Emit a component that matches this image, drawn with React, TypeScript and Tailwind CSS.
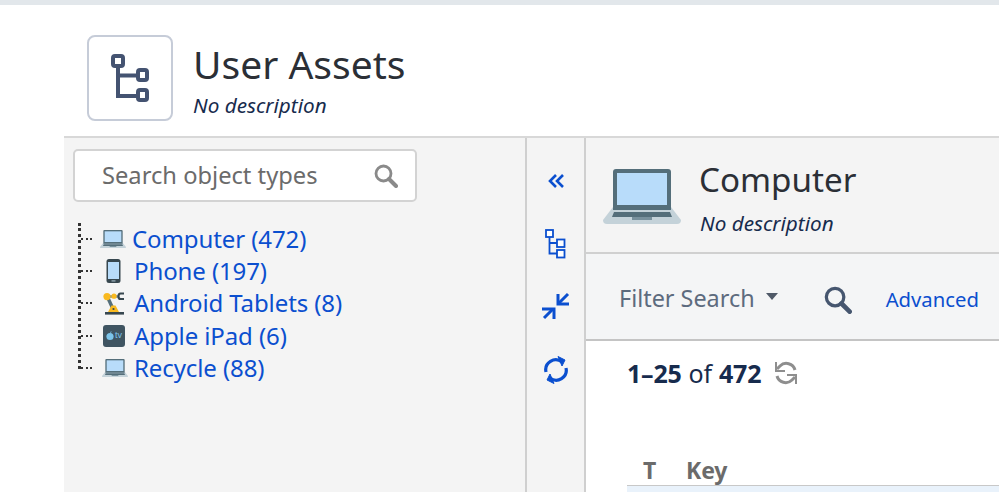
import React from "react";

const Laptop = ({ w = 26 }: { w?: number }) => (
  <svg width={w} height={(w * 55) / 78} viewBox="0 0 78 55" className="block">
    <path d="M0 51 L10 38 H68 L78 51 Q78 55 74 55 H4 Q0 55 0 51Z" fill="#c4d2d9" />
    <path d="M10 3 Q10 0 13 0 H65 Q68 0 68 3 V41 H10Z" fill="#546e7a" />
    <rect x="14" y="4" width="50" height="32" fill="#b8dcfa" />
    <path d="M11 43 H67 L69 48 H9Z" fill="#546e7a" />
    <rect x="29" y="48" width="20" height="3" fill="#78909c" />
  </svg>
);

const Phone = () => (
  <svg width="15" height="24" viewBox="0 0 15 24" className="block">
    <rect x="0.5" y="0" width="14" height="24" rx="2.5" fill="#37474f" />
    <rect x="2" y="3" width="11" height="17" fill="#b8dcfa" />
    <rect x="5.5" y="21.2" width="4" height="1.4" fill="#90a4ae" />
  </svg>
);

const Robot = () => (
  <svg width="22" height="23" viewBox="0 0 22 23" className="block">
    <rect x="2" y="20" width="19" height="2.6" fill="#37474f" />
    <path d="M4.5 5 L10 17" stroke="#546e7a" strokeWidth="3.4" />
    <path d="M4 4.5 H15" stroke="#78909c" strokeWidth="2.6" />
    <circle cx="4" cy="4.6" r="3.6" fill="#f9b91f" />
    <circle cx="11" cy="4.2" r="2.6" fill="#f9b91f" />
    <path d="M5 20 L8.5 13.5 H12.5 L16 20Z" fill="#f9b91f" />
    <circle cx="10.5" cy="17" r="1.1" fill="#37474f" />
    <path d="M21 1.5 H17.5 Q15.5 1.5 15.5 4.2 Q15.5 7 17.5 7 H21" fill="none" stroke="#37474f" strokeWidth="2.2" />
  </svg>
);

const AppleTv = () => (
  <div className="w-[22px] h-[22px] rounded-[3px] bg-[#3f5461] flex items-center justify-center gap-px text-[#7cc4ea]">
    <svg width="8" height="9" viewBox="0 0 8 9" className="block">
      <ellipse cx="4" cy="5.5" rx="3.6" ry="3.5" fill="#7cc4ea" />
      <path d="M4 2 Q4.2 0.5 5.6 0.2 Q5.5 1.8 4 2Z" fill="#7cc4ea" />
    </svg>
    <span className="text-[9px] leading-none font-['Liberation_Sans',sans-serif]">tv</span>
  </div>
);

const rows = [
  { icon: <Laptop />, box: "w-[36px] pr-[2px]", label: "Computer (472)" },
  { icon: <Phone />, box: "w-[38px] pr-[3px]", label: "Phone (197)" },
  { icon: <Robot />, box: "w-[38px] pr-[2px]", label: "Android Tablets (8)" },
  { icon: <AppleTv />, box: "w-[38px] pr-[2px]", label: "Apple iPad (6)" },
  { icon: <Laptop />, box: "w-[38px] pr-[1px]", label: "Recycle (88)" },
];

const Search = ({ size, color, sw }: { size: number; color: string; sw: number }) => (
  <svg width={size} height={size} viewBox="0 0 24 24" fill="none" className="block">
    <circle cx="9.5" cy="9.5" r="7.5" stroke={color} strokeWidth={sw} />
    <path d="M15 15 L22 22" stroke={color} strokeWidth={sw + 1.2} strokeLinecap="round" />
  </svg>
);

export default function App() {
  return (
    <div className="w-[999px] h-[492px] overflow-hidden bg-white flex flex-col font-['Noto_Sans','Open_Sans',sans-serif]">
      <div className="h-[5px] shrink-0 bg-[#e2e7eb]" />
      <header className="h-[131px] shrink-0 pl-[87px] pt-[30px] flex items-start">
        <div className="w-[86px] h-[86px] rounded-[8px] border-2 border-[#c6ccd8] flex items-center justify-center">
          <svg width="40" height="50" viewBox="0 0 40 50" fill="none" className="block">
            <path d="M8 8 V43 H28 M8 22.5 H28" stroke="#445371" strokeWidth="4" />
            <rect x="3" y="3" width="10" height="10" rx="2" fill="#fff" stroke="#445371" strokeWidth="4" />
            <rect x="28" y="17" width="9" height="10" rx="2" fill="#fff" stroke="#445371" strokeWidth="4" />
            <rect x="28" y="37" width="9" height="10" rx="2" fill="#fff" stroke="#445371" strokeWidth="4" />
          </svg>
        </div>
        <div className="ml-[20px] mt-[1px]">
          <h1 className="text-[39px] leading-[56px] text-[#2b2f36]">User Assets</h1>
          <p className="text-[20.7px] leading-[26px] italic text-[#172b4d]">No description</p>
        </div>
      </header>

      <main className="ml-[64px] flex-1 flex border-t-2 border-[#d8d8d8] min-h-0">
        <aside className="w-[461px] shrink-0 bg-[#f4f4f4] pl-[9px] pt-[11px]">
          <div className="w-[344px] h-[53px] bg-white border-2 border-[#d3d3d3] rounded-[5px] flex items-center pl-[27px] pr-[17px] justify-between">
            <span className="text-[23.7px] text-[#6b6b6b] mt-[1px]">Search object types</span>
            <Search size={24} color="#8a8a8a" sw={2.8} />
          </div>
          <ul className="mt-[20.5px] ml-[5px] relative">
            <div className="absolute left-0 top-[0px] h-[146px] border-l-[3px] border-dotted border-[#333]" />
            {rows.map((r) => (
              <li key={r.label} className="h-[32.4px] flex items-center">
                <span className="w-[11px] ml-[3px] border-t-[2px] border-dotted border-[#333]" />
                <span className={`${r.box} ml-[4px] flex items-center justify-center`}>{r.icon}</span>
                <a className="text-[24px] text-[#0b4fcf] tracking-[-0.1px] leading-none">{r.label}</a>
              </li>
            ))}
          </ul>
        </aside>

        <nav className="w-[61px] shrink-0 bg-[#f4f4f4] border-x-2 border-[#cfcfcf] flex flex-col items-center pt-[35px]">
          <svg width="18" height="16" viewBox="0 0 18 16" fill="none" stroke="#0b4fcf" strokeWidth="2.6" className="block">
            <path d="M9 2 L3 8 L9 14 M16 2 L10 8 L16 14" />
          </svg>
          <svg width="21" height="30" viewBox="0 0 21 30" fill="none" stroke="#0b4fcf" strokeWidth="1.8" className="block mt-[40px]">
            <rect x="1" y="1" width="7" height="7" fill="#fff" />
            <rect x="12" y="10.5" width="7.5" height="7.5" fill="#fff" />
            <rect x="12" y="21" width="7.5" height="7.5" fill="#fff" />
            <path d="M4.5 8 V24.5 H12 M4.5 14 H12" />
          </svg>
          <svg width="30" height="30" viewBox="0 0 30 30" fill="none" stroke="#0b4fcf" className="block mt-[32px]">
            <path d="M27 3 L18 12" strokeWidth="3" />
            <path d="M17 3 V13 H28" strokeWidth="3" />
            <path d="M3 27 L12 18" strokeWidth="3" />
            <path d="M1 18 H13 V28" strokeWidth="3" />
          </svg>
          <svg width="26" height="28" viewBox="0 0 26 28" fill="none" stroke="#0b4fcf" strokeWidth="3.2" className="block mt-[35px]">
            <path d="M3 16 A10 10 0 0 1 19 6" />
            <path d="M23 12 A10 10 0 0 1 7 22" />
            <path d="M15 0.5 L22 4 L19 10Z" fill="#0b4fcf" strokeWidth="1" />
            <path d="M11 27.5 L4 24 L7 18Z" fill="#0b4fcf" strokeWidth="1" />
          </svg>
        </nav>

        <section className="flex-1 flex flex-col min-w-0">
          <div className="h-[116px] shrink-0 bg-[#f4f4f4] border-b-2 border-[#d0d0d0] flex pl-[17px] pt-[31px]">
            <Laptop w={78} />
            <div className="ml-[18px] -mt-[14px]">
              <div className="text-[33.2px] leading-[50px] text-[#2b2f36]">Computer</div>
              <div className="text-[20.7px] leading-[26px] mt-[5px] ml-[1px] italic text-[#172b4d]">No description</div>
            </div>
          </div>
          <div className="h-[87px] shrink-0 bg-[#f4f5f6] border-b-2 border-[#c4c4c4] flex items-center pl-[33px] pt-[2px]">
            <span className="text-[23.4px] text-[#5d6b7e] mt-[2px]">Filter Search</span>
            <span className="ml-[11px] mb-[3px] w-0 h-0 border-x-[6px] border-x-transparent border-t-[7px] border-t-[#505a68]" />
            <span className="ml-[46px] mt-[4px]"><Search size={28} color="#46566f" sw={2.8} /></span>
            <span className="ml-[34px] mt-[4px] text-[20.3px] text-[#0b4fcf]">Advanced</span>
          </div>
          <div className="flex-1 bg-white pl-[41px] min-h-0">
            <div className="mt-[16px] h-[34px] flex items-center text-[25px] text-[#172b4d] tracking-[-0.2px]">
              <b className="font-bold">1–25</b>
              <span className="ml-[7px]">of</span>
              <b className="font-bold ml-[7px]">472</b>
              <svg width="24" height="24" viewBox="0 0 24 24" fill="none" stroke="#8e8e8e" strokeWidth="3" className="block ml-[13px] -mt-[3px]">
                <path d="M21 9 A9 9 0 0 0 6 5 L3 8" />
                <path d="M2 1 V10 H11" strokeWidth="2" />
                <path d="M3 15 A9 9 0 0 0 18 19 L21 16" />
                <path d="M22 23 V14 H13" strokeWidth="2" />
              </svg>
            </div>
            <div className="mt-[66px] h-[29px] flex items-start border-b border-[#c8c8c8] text-[#6b6b6b] font-bold text-[23px] leading-[26px] tracking-[-0.2px]">
              <span className="ml-[16px]">T</span>
              <span className="ml-[30px]">Key</span>
            </div>
            <div className="h-[10px] bg-[#e9f2fb]" />
          </div>
        </section>
      </main>
    </div>
  );
}
